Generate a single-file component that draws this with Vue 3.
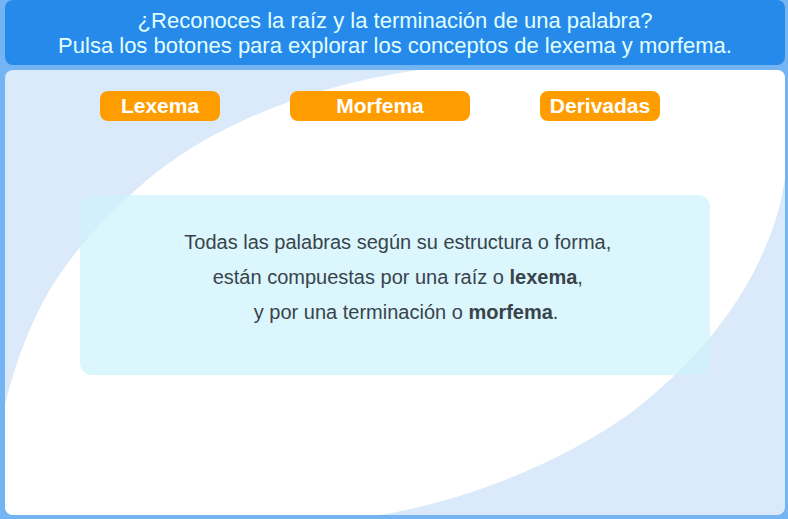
<script setup>
import { ref } from 'vue'

const concepts = [
  { id: 'lexema', label: 'Lexema' },
  { id: 'morfema', label: 'Morfema', wide: true },
  { id: 'derivadas', label: 'Derivadas' },
]
const selected = ref(null)
</script>

<template>
  <div class="activity">
    <header class="intro">
      <h1>
        ¿Reconoces la raíz y la terminación de una palabra?<br />
        Pulsa los botones para explorar los conceptos de lexema y morfema.
      </h1>
    </header>

    <main class="stage">
      <svg class="backdrop" viewBox="0 0 780 445" preserveAspectRatio="none" aria-hidden="true">
        <path
          d="M0 335 C12 285 32 237 55 204 C78 170 110 138 142 110 C170 87 200 68 235 52 C288 27 350 9 413 0
             H780 V108 C776 134 771 152 762 173 C748 208 730 236 707 265 C684 293 655 321 623 345
             C565 385 480 427 375 445 H0 Z"
          fill="#fff"
        />
      </svg>

      <nav class="concepts" aria-label="Conceptos">
        <button
          v-for="concept in concepts"
          :key="concept.id"
          type="button"
          class="concept"
          :class="{ wide: concept.wide }"
          @click="selected = concept.id"
        >
          {{ concept.label }}
        </button>
      </nav>

      <section class="explanation">
        <p>&nbsp;Todas las palabras según su estructura o forma,</p>
        <p>&nbsp;están compuestas por una raíz o <strong>lexema</strong>,</p>
        <p>&nbsp;&nbsp;&nbsp;&nbsp;y por una terminación o <strong>morfema</strong>.</p>
      </section>
    </main>
  </div>
</template>

<style>
body {
  margin: 0;
}
</style>

<style scoped>
.activity {
  box-sizing: border-box;
  min-height: 100vh;
  display: flex;
  flex-direction: column;
  gap: 5px;
  padding: 0 3px 4px 5px;
  background: #75b4f3;
  font-family: "Liberation Sans", Arial, sans-serif;
}

.intro {
  padding: 8px 0 7px;
  border-radius: 8px;
  background: #268aea;
  color: #e2ffff;
  text-align: center;
}

.intro h1 {
  margin: 0;
  font-size: 22px;
  font-weight: 400;
  line-height: 25px;
}

.stage {
  position: relative;
  flex: 1;
  border-radius: 8px;
  overflow: hidden;
  background: #daeafa;
}

.backdrop {
  position: absolute;
  inset: 0;
  width: 100%;
  height: 100%;
}

.concepts {
  position: relative;
  display: flex;
  gap: 70px;
  margin: 21px 125px 0 95px;
}

.concept {
  flex: 2 1 0;
  min-width: 0;
  height: 30px;
  padding: 0;
  border: 0;
  border-radius: 8px;
  background: #ff9c00;
  color: #fff;
  font: bold 21px/30px "Liberation Sans", Arial, sans-serif;
  cursor: pointer;
}

.concept.wide {
  flex-grow: 3;
}

.explanation {
  position: relative;
  margin: 74px 75px 0;
  padding: 30px 0 45px;
  border-radius: 12px;
  background: rgba(205, 242, 252, 0.7);
  color: #38444b;
  text-align: center;
}

.explanation p {
  margin: 0;
  font-size: 20px;
  line-height: 35px;
}
</style>
